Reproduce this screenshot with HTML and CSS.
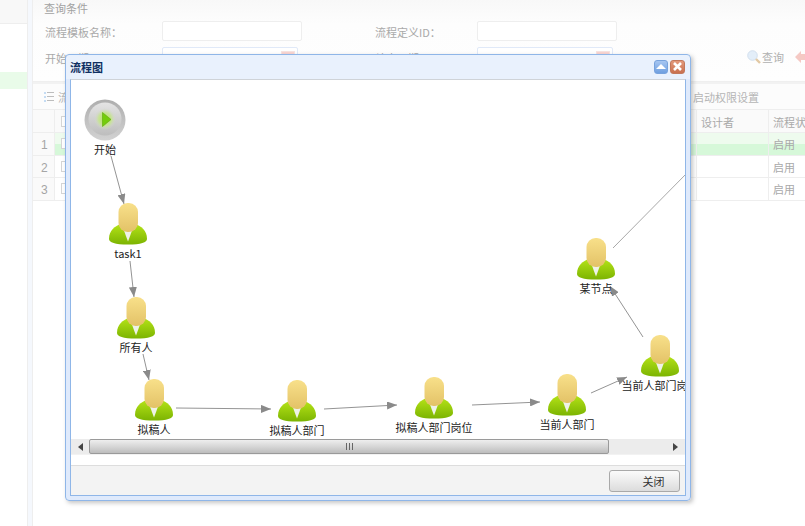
FILE: index.html
```html
<!DOCTYPE html>
<html lang="zh">
<head>
<meta charset="utf-8">
<title>流程模板</title>
<link rel="stylesheet" href="styles.css">
</head>
<body>
<svg class="defs" width="0" height="0" aria-hidden="true">
  <defs>
    <linearGradient id="skin" x1="0" y1="0" x2="0" y2="1">
      <stop offset="0" stop-color="#f8e08a"/>
      <stop offset="1" stop-color="#e3c267"/>
    </linearGradient>
    <linearGradient id="suit" x1="0" y1="0" x2="0" y2="1">
      <stop offset="0" stop-color="#b6e418"/>
      <stop offset="1" stop-color="#7cb402"/>
    </linearGradient>
    <linearGradient id="ring" x1="0" y1="0" x2="0" y2="1">
      <stop offset="0" stop-color="#aeaeae"/>
      <stop offset="1" stop-color="#d2d2d2"/>
    </linearGradient>
    <linearGradient id="disc" x1="0" y1="0" x2="0" y2="1">
      <stop offset="0" stop-color="#e4e4e4"/>
      <stop offset="1" stop-color="#bdbdbd"/>
    </linearGradient>
    <radialGradient id="glow">
      <stop offset="0" stop-color="#b2e45c"/>
      <stop offset=".6" stop-color="#c8e29a"/>
      <stop offset="1" stop-color="#d6d6d6" stop-opacity="0"/>
    </radialGradient>
    <marker id="arrow" markerUnits="userSpaceOnUse" markerWidth="10" markerHeight="8" refX="10" refY="4" orient="auto">
      <path d="M0 0 L10 4 L0 8 Z" fill="#8a8a8a"/>
    </marker>
    <symbol id="person" viewBox="0 0 40 42">
      <path d="M1 36 C1 27 7 23.500 13 20.500 L27 20.500 C33 23.500 39 27 39 36 C39 39.500 33 41.500 20 41.500 C7 41.500 1 39.500 1 36 Z" fill="url(#suit)"/>
      <path d="M15 25 L25 25 L20 38.500 Z" fill="#eef2e8"/>
      <rect x="10.500" y="0" width="19.500" height="29" rx="9" fill="url(#skin)"/>
    </symbol>
  </defs>
</svg>

<div class="page">
  <aside class="side">
    <div class="side-head"></div>
    <div class="side-active"></div>
  </aside>
  <div class="splitter"></div>
  <main class="main">
    <section class="query">
      <div class="query-title">查询条件</div>
      <div class="query-grid">
        <label class="q-label">流程模板名称：</label>
        <div class="q-cell"><span class="q-input"></span></div>
        <label class="q-label">流程定义ID：</label>
        <div class="q-cell"><span class="q-input"></span></div>
        <div></div>
        <label class="q-label">开始日期</label>
        <div class="q-cell"><span class="q-input q-date"><i class="cal"></i></span></div>
        <label class="q-label">结束日期</label>
        <div class="q-cell"><span class="q-input q-date"><i class="cal"></i></span></div>
        <div class="q-actions">
          <span class="q-btn">
            <svg width="14" height="14" viewBox="0 0 14 14"><circle cx="5.5" cy="5.5" r="4.8" fill="#e3eef9" stroke="#d3e0ee"/><path d="M9 9 L13 13" stroke="#e2c9a4" stroke-width="2.4"/></svg>
            查询
          </span>
          <span class="q-btn">
            <svg width="14" height="12" viewBox="0 0 14 12"><path d="M0 6 L6 0 L6 3 L14 3 L14 9 L6 9 L6 12 Z" fill="#f5c9c4"/></svg>
            重置
          </span>
        </div>
      </div>
    </section>

    <section class="grid-panel">
      <div class="toolbar">
        <svg width="10" height="12" viewBox="0 0 10 12"><g fill="#c5dcf3"><rect x="0" y="1" width="2" height="2"/><rect x="0" y="5" width="2" height="2"/><rect x="0" y="9" width="2" height="2"/></g><g fill="#bdbdbd"><rect x="3" y="1" width="7" height="1"/><rect x="3" y="5" width="7" height="1"/><rect x="3" y="9" width="7" height="1"/></g></svg>
        <span class="tool-text">流程模板</span>
        <span class="tool-text tool-right">启动权限设置</span>
      </div>
      <div class="row row-head">
        <div class="cell"></div>
        <div class="cell cell-check"><i class="check"></i></div>
        <div class="cell">设计者</div>
        <div class="cell">流程状态</div>
      </div>
      <div class="row row-active">
        <div class="cell cell-num">1</div>
        <div class="cell cell-check"><i class="check"></i></div>
        <div class="cell"></div>
        <div class="cell">启用</div>
      </div>
      <div class="row">
        <div class="cell cell-num">2</div>
        <div class="cell cell-check"><i class="check"></i></div>
        <div class="cell"></div>
        <div class="cell">启用</div>
      </div>
      <div class="row">
        <div class="cell cell-num">3</div>
        <div class="cell cell-check"><i class="check"></i></div>
        <div class="cell"></div>
        <div class="cell">启用</div>
      </div>
    </section>
  </main>
</div>

<div class="dialog">
  <header class="dialog-title">
    <span class="dialog-name">流程图</span>
    <span class="win-btn win-collapse"><svg width="10" height="5" viewBox="0 0 10 5"><path d="M0 5 L5 0 L10 5 Z" fill="#fff"/></svg></span>
    <span class="win-btn win-close"><svg width="9" height="9" viewBox="0 0 9 9"><path d="M1 1 L8 8 M8 1 L1 8" stroke="#fff" stroke-width="2.6"/></svg></span>
  </header>
  <div class="dialog-frame">
    <div class="canvas">
      <svg class="edges" width="615" height="359" viewBox="0 0 615 359">
        <g fill="none" stroke="#949494" stroke-width="1">
          <line x1="40" y1="76" x2="53" y2="124" marker-end="url(#arrow)"/>
          <line x1="59" y1="181" x2="63" y2="217" marker-end="url(#arrow)"/>
          <line x1="72" y1="274" x2="78" y2="300" marker-end="url(#arrow)"/>
          <line x1="105" y1="328" x2="200" y2="329" marker-end="url(#arrow)"/>
          <line x1="253" y1="329" x2="326" y2="325" marker-end="url(#arrow)"/>
          <line x1="401" y1="325" x2="469" y2="322" marker-end="url(#arrow)"/>
          <line x1="520" y1="313" x2="556" y2="297" marker-end="url(#arrow)"/>
          <line x1="572" y1="257" x2="539" y2="206" marker-end="url(#arrow)"/>
          <line x1="542" y1="168" x2="618" y2="91" stroke="#a8a8a8"/>
        </g>
      </svg>
      <div class="node n-start">
        <svg class="node-icon" width="42" height="42" viewBox="0 0 42 42">
          <circle cx="21" cy="21" r="20.500" fill="url(#ring)"/>
          <circle cx="21" cy="20" r="16.500" fill="url(#disc)"/>
          <circle cx="21" cy="20" r="11" fill="url(#glow)"/>
          <path d="M18.500 13.500 L27 20.500 L18.500 27.500 Z" fill="#74cc0c" stroke="#5eaa08" stroke-width=".6"/>
        </svg>
        <span class="node-label">开始</span>
      </div>
      <div class="node n-task1"><svg class="node-icon" width="40" height="42"><use href="#person"/></svg><span class="node-label">task1</span></div>
      <div class="node n-owner"><svg class="node-icon" width="40" height="42"><use href="#person"/></svg><span class="node-label">所有人</span></div>
      <div class="node n-drafter"><svg class="node-icon" width="40" height="42"><use href="#person"/></svg><span class="node-label">拟稿人</span></div>
      <div class="node n-dept"><svg class="node-icon" width="40" height="42"><use href="#person"/></svg><span class="node-label">拟稿人部门</span></div>
      <div class="node n-post"><svg class="node-icon" width="40" height="42"><use href="#person"/></svg><span class="node-label">拟稿人部门岗位</span></div>
      <div class="node n-curdept"><svg class="node-icon" width="40" height="42"><use href="#person"/></svg><span class="node-label">当前人部门</span></div>
      <div class="node n-curpost"><svg class="node-icon" width="40" height="42"><use href="#person"/></svg><span class="node-label">当前人部门岗位</span></div>
      <div class="node n-some"><svg class="node-icon" width="40" height="42"><use href="#person"/></svg><span class="node-label">某节点</span></div>
    </div>
    <div class="hscroll">
      <span class="hs-btn"><svg width="5" height="8" viewBox="0 0 5 8"><path d="M5 0 L0 4 L5 8 Z" fill="#444"/></svg></span>
      <span class="hs-thumb"><svg width="7" height="7" viewBox="0 0 7 7"><path d="M.5 0 V7 M3.5 0 V7 M6.5 0 V7" stroke="#666"/></svg></span>
      <span class="hs-btn hs-end"><svg width="5" height="8" viewBox="0 0 5 8"><path d="M0 0 L5 4 L0 8 Z" fill="#444"/></svg></span>
    </div>
    <div class="strip"></div>
    <footer class="dialog-foot">
      <button class="close-btn">关闭</button>
    </footer>
  </div>
</div>
</body>
</html>
```

FILE: styles.css
```css
* { box-sizing: border-box; }
html, body { margin: 0; height: 100%; }
body {
  width: 805px;
  height: 526px;
  overflow: hidden;
  background: #fff;
  font-family: "Noto Sans CJK SC", "Liberation Sans", sans-serif;
  font-size: 11px;
  color: #a9a9a9;
  position: relative;
}
.defs { position: absolute; }
.page { display: flex; width: 805px; height: 526px; }

/* sidebar */
.side { width: 28px; border-right: 1px solid #eeeeee; flex: none; }
.side-head { height: 24px; background: #f8f8f8; border-bottom: 1px solid #eeeeee; }
.side-active { height: 17px; margin-top: 48px; background: #e9fbe9; }
.splitter { width: 4px; background: #f5f8fd; flex: none; }

/* main */
.main { flex: 1; min-width: 0; border-left: 1px solid #eeeeee; overflow: hidden; }
.query {
  height: 82px;
  padding: 1px 0 0 11px;
  background: linear-gradient(#f8f8f8, #fdfdfd 30%, #fefefe);
  border-bottom: 1px solid #efefef;
}
.query-title { height: 14px; line-height: 14px; font-size: 11px; color: #a2a2a2; }
.query-grid {
  margin-top: 6px;
  display: grid;
  grid-template-columns: 118px 212px 103px 200px 1fr;
  grid-auto-rows: 20px;
  row-gap: 6px;
}
.q-label {
  line-height: 22px;
  padding-left: 1px;
  font-family: "Noto Sans CJK TC", "Noto Sans CJK SC", sans-serif;
  font-size: 11px;
  color: #a9a9a9;
  white-space: nowrap;
}
.q-cell { display: flex; }
.q-input {
  display: block;
  width: 140px;
  height: 20px;
  background: #fff;
  border: 1px solid #eeeeee;
  border-radius: 2px;
}
.q-date { width: 136px; border-color: #e0e9f8; position: relative; }
.cal {
  position: absolute;
  top: 3px;
  right: 2px;
  width: 14px;
  height: 12px;
  background: #f9d5d2;
  border: 1px solid #f7e3e1;
}
.q-actions { display: flex; gap: 11px; padding-left: 70px; align-items: center; white-space: nowrap; }
.q-btn { display: flex; align-items: center; gap: 1px; color: #b0b0b0; font-size: 11px; }

/* grid */
.grid-panel { border-top: 2px solid #f2f2f2; }
.toolbar {
  height: 26px;
  display: flex;
  align-items: center;
  padding: 0 46px 0 11px;
  gap: 4px;
  background: #fcfcfc;
  border-bottom: 1px solid #eeeeee;
}
.tool-text { color: #b5b5b5; font-size: 11px; }
.tool-right { margin-left: auto; }
.row {
  display: grid;
  grid-template-columns: 22px 642px 72px 1fr;
  height: 22.500px;
  border-bottom: 1px solid #eeeeee;
  background: #fff;
}
.row-head { height: 23px; background: #fafafa; }
.row-head .cell { line-height: 25px; }
.row-active { background: linear-gradient(#eefbee 50%, #d6f8d9 50%); }
.cell {
  border-right: 1px solid #eeeeee;
  padding-left: 4px;
  line-height: 23px;
  color: #a9a9a9;
  font-size: 11px;
  white-space: nowrap;
  overflow: hidden;
}
.cell:last-child { border-right: 0; }
.cell-num {
  background: #fafafa;
  padding-left: 8px;
  line-height: 25px;
  font-family: "Liberation Sans", sans-serif;
  font-size: 12px;
  color: #a5a5a5;
}
.cell-check { padding-left: 6px; display: flex; align-items: center; }
.check { display: block; width: 7px; height: 11px; border: 1px solid #d5d5d5; background: #fff; }

/* dialog window */
.dialog {
  position: absolute;
  left: 65px;
  top: 54px;
  width: 626px;
  height: 447px;
  background: linear-gradient(#e9f1fd 24px, #dfeafc 24px);
  border: 1px solid #8fb6e8;
  border-radius: 4px;
  box-shadow: 2px 2px 4px rgba(90, 90, 90, .35);
  display: flex;
  flex-direction: column;
  padding: 0 4px 4px 4px;
}
.dialog-title {
  height: 24px;
  flex: none;
  display: flex;
  align-items: center;
  gap: 2px;
  padding: 0 1px 1px 0;
}
.dialog-name {
  margin-right: auto;
  font-size: 11px;
  font-weight: 700;
  color: #0f2f62;
}
.win-btn {
  width: 15px;
  height: 14px;
  border-radius: 3px;
  display: flex;
  align-items: center;
  justify-content: center;
}
.win-collapse { width: 14px; background: linear-gradient(#a6c6f2, #6f9fe0); border: 1px solid #78a3dd; }
.win-close { background: linear-gradient(#e39a7c, #c9704e); border: 1px solid #c2785c; }
.dialog-frame {
  flex: 1;
  min-height: 0;
  display: flex;
  flex-direction: column;
  border: 1px solid #8fb6e8;
  border-top-color: #cfd3d8;
  background: #fff;
}
.canvas { position: relative; height: 359px; flex: none; overflow: hidden; background: #fff; }
.edges { position: absolute; left: 0; top: 0; }
.node {
  position: absolute;
  width: 100px;
  display: flex;
  flex-direction: column;
  align-items: center;
}
.node-icon { display: block; flex: none; }
.node-label {
  margin-top: 2px;
  line-height: 12px;
  height: 12px;
  font-size: 11px;
  color: #222;
  white-space: nowrap;
}
.n-start { left: -16px; top: 19px; }
.n-task1 { left: 7px; top: 123px; }
.n-owner { left: 15px; top: 217px; }
.n-drafter { left: 33px; top: 299px; }
.n-dept { left: 176px; top: 300px; }
.n-post { left: 313px; top: 297px; }
.n-curdept { left: 446px; top: 294px; }
.n-curpost { left: 539px; top: 255px; }
.n-some { left: 475px; top: 158px; }

.hscroll {
  height: 16px;
  flex: none;
  display: flex;
  align-items: center;
  background: #ececec;
  border-bottom: 1px solid #f2f2f2;
}
.hs-btn { width: 18px; flex: none; display: flex; justify-content: center; }
.hs-thumb {
  width: 520px;
  height: 15px;
  flex: none;
  display: flex;
  align-items: center;
  justify-content: center;
  background: linear-gradient(#eeeeee, #d9d9d9 45%, #bdbdbd);
  border: 1px solid #9a9a9a;
  border-radius: 2px;
}
.hs-end { margin-left: auto; width: 20px; }
.strip { height: 10px; flex: none; background: #fff; }
.dialog-foot {
  flex: 1;
  min-height: 0;
  background: #f3f3f3;
  border-top: 1px solid #dddddd;
  display: flex;
  justify-content: flex-end;
  align-items: flex-start;
  padding: 4px 5px 0 0;
}
.close-btn {
  width: 71px;
  height: 22px;
  padding: 0 0 0 18px;
  background: linear-gradient(#fbfbfb, #dcdcdc);
  border: 1px solid #a9a9a9;
  border-radius: 3px;
  font-family: inherit;
  font-size: 11px;
  color: #333;
}
```
